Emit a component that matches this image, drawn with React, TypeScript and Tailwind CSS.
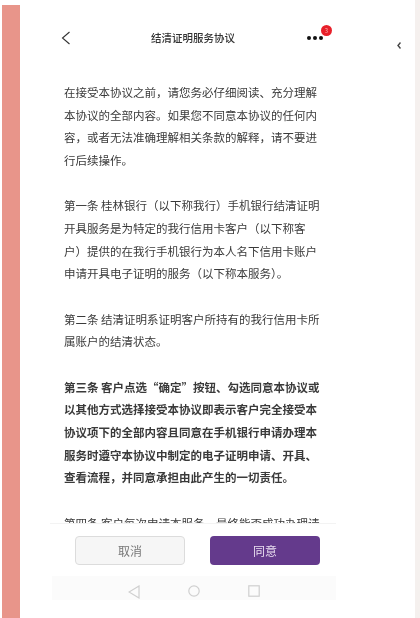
const paragraphs = [
  {
    lines: [
      '在接受本协议之前，请您务必仔细阅读、充分理解',
      '本协议的全部内容。如果您不同意本协议的任何内',
      '容，或者无法准确理解相关条款的解释，请不要进',
      '行后续操作。',
    ],
  },
  {
    lines: [
      '第一条 桂林银行（以下称我行）手机银行结清证明',
      '开具服务是为特定的我行信用卡客户（以下称客',
      '户）提供的在我行手机银行为本人名下信用卡账户',
      '申请开具电子证明的服务（以下称本服务）。',
    ],
  },
  {
    lines: ['第二条 结清证明系证明客户所持有的我行信用卡所', '属账户的结清状态。'],
  },
  {
    bold: true,
    lines: [
      '第三条 客户点选“确定”按钮、勾选同意本协议或',
      '以其他方式选择接受本协议即表示客户完全接受本',
      '协议项下的全部内容且同意在手机银行申请办理本',
      '服务时遵守本协议中制定的电子证明申请、开具、',
      '查看流程，并同意承担由此产生的一切责任。',
    ],
  },
  {
    lines: ['第四条 客户每次申请本服务，最终能否成功办理请'],
  },
]

export default function App() {
  return (
    <div
      className="relative flex h-[618px] w-[420px] overflow-hidden bg-white text-[#3a3a3a]"
      style={{ fontFamily: '"Noto Sans CJK SC", "Liberation Sans", sans-serif' }}
    >
      {/* Left strip */}
      <div className="ml-[2px] mt-[5px] w-[18px] shrink-0 bg-[#e8958a]" />

      {/* Phone screen */}
      <div className="ml-[30px] flex w-[286px] shrink-0 flex-col blur-[0.5px]">
        {/* Header */}
        <div className="relative mt-[27px] flex h-[22px] items-center justify-center">
          <svg
            className="absolute left-[11px] top-[4px]"
            width="10"
            height="14"
            viewBox="0 0 10 14"
            fill="none"
            stroke="#333"
            strokeWidth="1.1"
          >
            <path d="M8.5 1 L1.5 7 L8.5 13" />
          </svg>
          <span className="text-[10.5px] font-medium leading-none text-[#333]">结清证明服务协议</span>
          <div className="absolute left-[257px] top-[9px] flex gap-[2px]">
            <span className="h-[4px] w-[4px] rounded-full bg-[#111]" />
            <span className="h-[4px] w-[4px] rounded-full bg-[#111]" />
            <span className="h-[4px] w-[4px] rounded-full bg-[#111]" />
          </div>
          <span className="absolute left-[271px] top-[-2px] flex h-[11px] w-[11px] items-center justify-center rounded-full bg-[#e8202a] text-[6px] leading-none text-[#f6b0b0]">
            3
          </span>
        </div>

        {/* Agreement text */}
        <div className="mt-[32px] h-[443px] overflow-hidden border-b border-[#f3f3f3] pl-[14px]">
          <div className="flex flex-col gap-[22.5px]">
            {paragraphs.map((p, i) => (
              <div
                key={i}
                className={p.bold ? 'text-[11.5px] font-bold leading-[22.7px]' : 'text-[11.5px] leading-[22.7px]'}
              >
                {p.lines.map((line) => (
                  <div key={line} className="whitespace-nowrap">
                    {line}
                  </div>
                ))}
              </div>
            ))}
          </div>
        </div>

        {/* Buttons */}
        <div className="mt-[12px] flex gap-[25px] pl-[25px]">
          <button className="h-[29px] w-[110px] rounded-[4px] border-[1.5px] border-[#dcdcdc] bg-[#f6f6f6] text-[12px] text-[#777]">
            取消
          </button>
          <button className="h-[29px] w-[110px] rounded-[4px] bg-[#643a8c] text-[12px] text-[#eadff0]">
            同意
          </button>
        </div>

        {/* Android nav bar */}
        <div className="ml-[2px] mt-[11px] flex h-[24px] items-start gap-[48px] bg-[#fbfbfb] pl-[76px] pt-[9px]">
          <svg width="12" height="14" viewBox="0 0 12 14" fill="none" stroke="#cfcfcf" strokeWidth="1.2">
            <path d="M11 1 V13 L1 7 Z" />
          </svg>
          <svg width="12" height="12" viewBox="0 0 12 12" fill="none" stroke="#cfcfcf" strokeWidth="1.2">
            <circle cx="6" cy="6" r="5.2" />
          </svg>
          <svg width="12" height="12" viewBox="0 0 12 12" fill="none" stroke="#cfcfcf" strokeWidth="1.2">
            <rect x="0.8" y="0.8" width="10.4" height="10.4" />
          </svg>
        </div>
      </div>

      {/* Next screenshot peeking in */}
      <svg
        className="absolute left-[397px] top-[42px]"
        width="4"
        height="7"
        viewBox="0 0 4 7"
        fill="none"
        stroke="#444"
        strokeWidth="1.4"
      >
        <path d="M3.5 0.5 L1 3.5 L3.5 6.5" />
      </svg>

      {/* Right strip */}
      <div className="ml-auto w-[5px] shrink-0 bg-[#f5f0ee]" />
    </div>
  )
}
